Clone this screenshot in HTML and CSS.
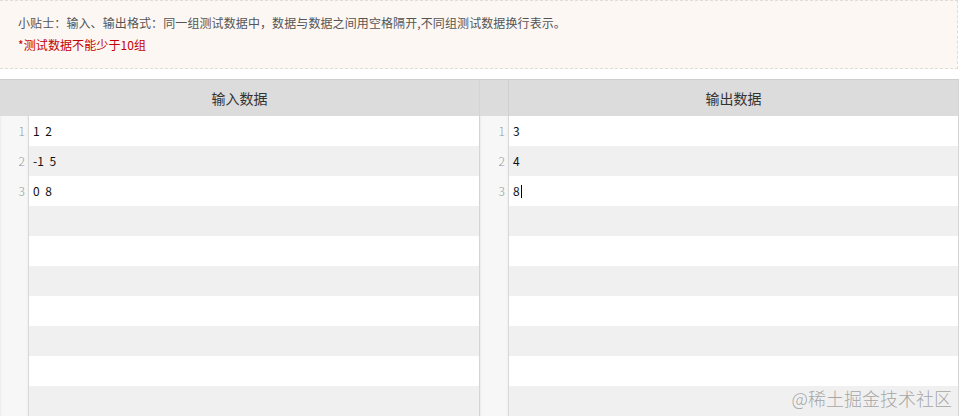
FILE: index.html
```html
<!DOCTYPE html>
<html lang="zh-CN">
<head>
    <meta charset="UTF-8">
    <title>测试数据</title>
    <link rel="stylesheet" href="styles.css">
</head>
<body>
    <div class="tip">
        <p>小贴士：输入、输出格式：同一组测试数据中，数据与数据之间用空格隔开,不同组测试数据换行表示。</p>
        <p class="warn">*测试数据不能少于10组</p>
    </div>

    <div class="panels">
        <div class="panel panel-in">
            <div class="panel-head">
                <span class="head-title">输入数据</span>
            </div>
            <div class="row"><span class="num">1</span><span class="line">1 2</span></div>
            <div class="row"><span class="num">2</span><span class="line">-1 5</span></div>
            <div class="row"><span class="num">3</span><span class="line">0 8</span></div>
            <div class="row"><span class="num"></span><span class="line"></span></div>
            <div class="row"><span class="num"></span><span class="line"></span></div>
            <div class="row"><span class="num"></span><span class="line"></span></div>
            <div class="row"><span class="num"></span><span class="line"></span></div>
            <div class="row"><span class="num"></span><span class="line"></span></div>
            <div class="row"><span class="num"></span><span class="line"></span></div>
            <div class="row"><span class="num"></span><span class="line"></span></div>
        </div>

        <div class="panel panel-out">
            <div class="panel-head">
                <span class="head-gutter"></span>
                <span class="head-title">输出数据</span>
            </div>
            <div class="row"><span class="num">1</span><span class="line">3</span></div>
            <div class="row"><span class="num">2</span><span class="line">4</span></div>
            <div class="row"><span class="num">3</span><span class="line">8<i class="caret"></i></span></div>
            <div class="row"><span class="num"></span><span class="line"></span></div>
            <div class="row"><span class="num"></span><span class="line"></span></div>
            <div class="row"><span class="num"></span><span class="line"></span></div>
            <div class="row"><span class="num"></span><span class="line"></span></div>
            <div class="row"><span class="num"></span><span class="line"></span></div>
            <div class="row"><span class="num"></span><span class="line"></span></div>
            <div class="row"><span class="num"></span><span class="line"></span></div>
        </div>
    </div>

    <div class="watermark">@稀土掘金技术社区</div>
</body>
</html>
```

FILE: styles.css
```css
* {
    margin: 0;
    padding: 0;
    box-sizing: border-box;
}

body {
    position: relative;
    width: 959px;
    height: 416px;
    overflow: hidden;
    background: #fff;
    font-family: "Noto Sans CJK SC", "Liberation Sans", sans-serif;
    font-size: 12px;
    color: #333;
}

.tip {
    height: 69px;
    margin: 0 1px 10px 0;
    padding: 11px 0 0 18px;
    background-color: #fcf7f3;
    border: 1px dashed #e2dcd6;
    border-left: none;
}

.tip p {
    color: #555;
    line-height: 22px;
    letter-spacing: 0.1px;
}

.tip .warn {
    color: #c40000;
}

.panels {
    display: flex;
    border-top: 1px solid #cdcdcd;
}

.panel {
    width: 479px;
}

.panel-out {
    width: 480px;
    border-left: 1px solid #d4d4d4;
    border-right: 1px solid #d4d4d4;
}

.panel-head {
    display: flex;
    height: 36px;
    background-color: #dcdcdc;
    align-items: center;
}

.head-title {
    flex: 1;
    text-align: center;
    font-size: 14px;
    color: #333;
}

.head-gutter {
    width: 29px;
    height: 100%;
    border-right: 1px solid #cfcfcf;
}

.row {
    display: flex;
    height: 30px;
}

.num {
    width: 29px;
    padding-right: 3px;
    text-align: right;
    line-height: 30px;
    font-weight: 300;
    color: #999;
    background: linear-gradient(to right, #ececec 0, #f7f7f7 2px, #f7f7f7 26px, #eeeeee 29px);
    border-right: 1px solid #d8d8d8;
}

.line {
    flex: 1;
    padding-left: 4px;
    line-height: 30px;
    color: #111;
    word-spacing: 3px;
    white-space: pre;
}

.row:nth-of-type(odd) .line {
    background-color: #f0f0f0;
}

.caret {
    display: inline-block;
    width: 1px;
    height: 13px;
    margin-left: 1px;
    vertical-align: -2px;
    background-color: #000;
}

.watermark {
    position: absolute;
    right: 7px;
    bottom: 5px;
    font-size: 18px;
    font-weight: 300;
    color: rgba(140, 140, 140, 0.75);
}
```
